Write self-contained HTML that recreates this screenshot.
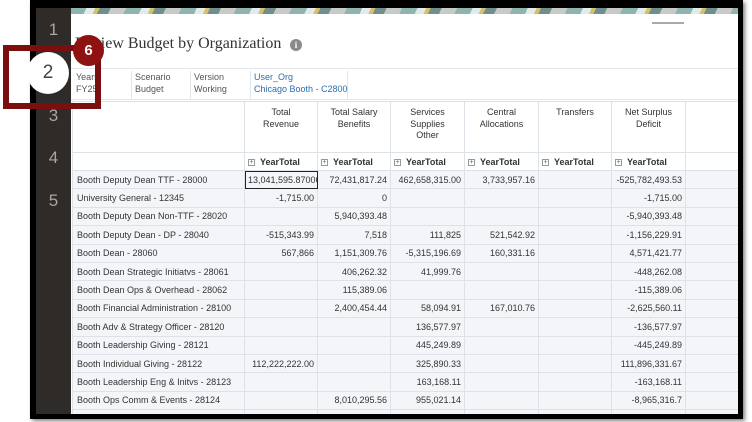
<!DOCTYPE html>
<html><head><meta charset="utf-8"><style>
*{margin:0;padding:0;box-sizing:border-box}
body{width:752px;height:422px;background:#fff;position:relative;overflow:hidden;font-family:"Liberation Sans",Arial,sans-serif}
.frame{position:absolute;left:30px;top:0;width:713px;height:419px;background:#000;box-shadow:2px 2px 4px rgba(0,0,0,.5)}
.side{position:absolute;left:36px;top:8px;width:35px;height:406px;background:#2f2b28}
.side span{position:absolute;left:0;width:35px;text-align:center;color:#a9a5a2;font-size:17px}
.content{position:absolute;left:71px;top:8px;width:667px;height:406px;background:#fff;overflow:hidden}
.banner{position:absolute;left:0;top:0;width:667px;height:6px;background:repeating-linear-gradient(115deg,#8fb3af 0 14px,#dfeceb 14px 22px,#d9c068 22px 26px,#6f8f8c 26px 36px,#c8cac8 36px 50px)}
.title{position:absolute;left:4px;top:27px;font-family:"Liberation Serif",serif;font-size:16px;color:#333}
.info{position:absolute;left:219px;top:31px;width:12px;height:12px;border-radius:50%;background:#8a8a8a;color:#fff;font-size:9px;font-weight:bold;text-align:center;line-height:12px;font-family:"Liberation Serif",serif}
.pov{position:absolute;top:63px;font-size:9px;color:#555;line-height:12px;padding-left:3px;height:28px;border-left:1px solid #e1e4e8;white-space:nowrap}
.pov.b{color:#2a6fb0}
.hline{position:absolute;left:0;width:667px;height:1px;background:#e3e7ec}
.drag{position:absolute;left:581px;top:14px;width:32px;height:2px;background:#aaa}
table{position:absolute;left:1px;top:93px;width:673px;border-collapse:collapse;table-layout:fixed;font-size:9px;color:#333}
td{border:1px solid #dde2e8;background:#f3f5f8;height:18.4px;padding:0 3px;white-space:nowrap;overflow:hidden;text-align:right}
td.l{text-align:left;padding-left:4px}
tr.h td{background:#fff;text-align:center;vertical-align:top;height:51px;padding-top:5px;line-height:11.5px;white-space:normal}
tr.y td{background:#fff;text-align:left;font-weight:bold;height:18px;padding-left:3px}
tr.y td i{display:inline-block;width:7px;height:7px;border:1px solid #999;font-style:normal;font-size:7px;line-height:5px;text-align:center;color:#666;margin-right:5px;vertical-align:1px;font-weight:normal}
.sel{outline:1.5px solid #222;outline-offset:-1px}
.redbox{position:absolute;left:3px;top:45px;width:98px;height:64px;border:6px solid #7b0e0e}
.badge{position:absolute;left:73px;top:35px;width:31px;height:31px;border-radius:50%;background:#8e1212;color:#fff;font-weight:bold;font-size:15px;text-align:center;line-height:31px}
.two{position:absolute;left:27px;top:52px;width:42px;height:42px;border-radius:50%;background:#fff;color:#444;font-size:19px;text-align:center;line-height:42px}
</style></head><body>
<div class="frame"></div>
<div class="side">
<span style="top:12px">1</span>
<span style="top:98px">3</span>
<span style="top:140px">4</span>
<span style="top:183px">5</span>
</div>
<div class="content">
<div class="banner"></div>
<div class="drag"></div>
<div class="title">Review Budget by Organization</div>
<div class="info">i</div>
<div class="hline" style="top:60px"></div>
<div class="pov" style="left:2px;border-left:none">Years<br>FY25</div>
<div class="pov" style="left:60px">Scenario<br>Budget</div>
<div class="pov" style="left:119px">Version<br>Working</div>
<div class="pov b" style="left:179px;width:98px;border-right:1px solid #e1e4e8">User_Org<br>Chicago Booth - C2800</div>
<div class="hline" style="top:91px"></div>
<table>
<colgroup><col style="width:172px"><col style="width:73px"><col style="width:73px"><col style="width:74px"><col style="width:74px"><col style="width:73px"><col style="width:74px"><col style="width:60px"></colgroup>
<tr class="h"><td></td><td>Total<br>Revenue</td><td>Total Salary<br>Benefits</td><td>Services<br>Supplies<br>Other</td><td>Central<br>Allocations</td><td>Transfers</td><td>Net Surplus<br>Deficit</td><td></td></tr>
<tr class="y"><td></td><td><i>+</i>YearTotal</td><td><i>+</i>YearTotal</td><td><i>+</i>YearTotal</td><td><i>+</i>YearTotal</td><td><i>+</i>YearTotal</td><td><i>+</i>YearTotal</td><td></td></tr>
<tr><td class="l">Booth Deputy Dean TTF - 28000</td><td class="sel">13,041,595.87000</td><td>72,431,817.24</td><td>462,658,315.00</td><td>3,733,957.16</td><td></td><td>-525,782,493.53</td><td></td></tr>
<tr><td class="l">University General - 12345</td><td>-1,715.00</td><td>0</td><td></td><td></td><td></td><td>-1,715.00</td><td></td></tr>
<tr><td class="l">Booth Deputy Dean Non-TTF - 28020</td><td></td><td>5,940,393.48</td><td></td><td></td><td></td><td>-5,940,393.48</td><td></td></tr>
<tr><td class="l">Booth Deputy Dean - DP - 28040</td><td>-515,343.99</td><td>7,518</td><td>111,825</td><td>521,542.92</td><td></td><td>-1,156,229.91</td><td></td></tr>
<tr><td class="l">Booth Dean - 28060</td><td>567,866</td><td>1,151,309.76</td><td>-5,315,196.69</td><td>160,331.16</td><td></td><td>4,571,421.77</td><td></td></tr>
<tr><td class="l">Booth Dean Strategic Initiatvs - 28061</td><td></td><td>406,262.32</td><td>41,999.76</td><td></td><td></td><td>-448,262.08</td><td></td></tr>
<tr><td class="l">Booth Dean Ops &amp; Overhead - 28062</td><td></td><td>115,389.06</td><td></td><td></td><td></td><td>-115,389.06</td><td></td></tr>
<tr><td class="l">Booth Financial Administration - 28100</td><td></td><td>2,400,454.44</td><td>58,094.91</td><td>167,010.76</td><td></td><td>-2,625,560.11</td><td></td></tr>
<tr><td class="l">Booth Adv &amp; Strategy Officer - 28120</td><td></td><td></td><td>136,577.97</td><td></td><td></td><td>-136,577.97</td><td></td></tr>
<tr><td class="l">Booth Leadership Giving - 28121</td><td></td><td></td><td>445,249.89</td><td></td><td></td><td>-445,249.89</td><td></td></tr>
<tr><td class="l">Booth Individual Giving - 28122</td><td>112,222,222.00</td><td></td><td>325,890.33</td><td></td><td></td><td>111,896,331.67</td><td></td></tr>
<tr><td class="l">Booth Leadership Eng &amp; Initvs - 28123</td><td></td><td></td><td>163,168.11</td><td></td><td></td><td>-163,168.11</td><td></td></tr>
<tr><td class="l">Booth Ops Comm &amp; Events - 28124</td><td></td><td>8,010,295.56</td><td>955,021.14</td><td></td><td></td><td>-8,965,316.7</td><td></td></tr>
<tr><td class="l">Booth Advancement Services - 28125</td><td></td><td></td><td>215,330.24</td><td>521,094.16</td><td></td><td>-736,243.5</td><td></td></tr>
</table>
</div>
<div class="redbox"></div>
<div class="two">2</div>
<div class="badge">6</div>
</body></html>
